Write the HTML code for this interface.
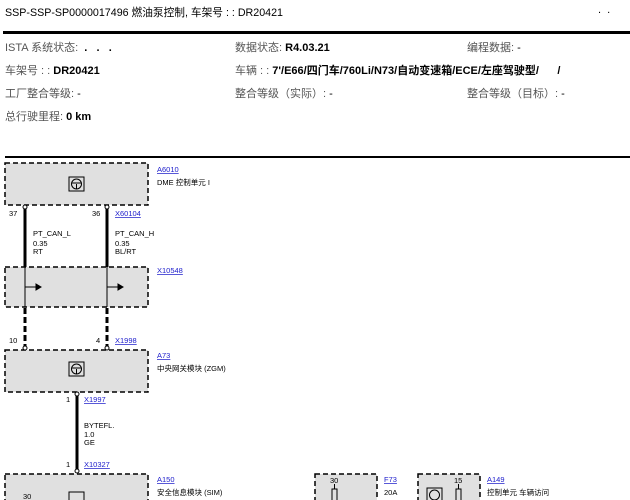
<!DOCTYPE html>
<html><head><meta charset="utf-8"><style>
body{margin:0;width:630px;height:500px;overflow:hidden;background:#fff;font-family:"Liberation Sans","Noto Sans CJK SC",sans-serif;color:#000;position:relative}
.t{position:absolute;font-size:11px;white-space:nowrap}
.g{color:#555}
b{font-weight:bold;color:#000}
</style></head><body>
<div class="t" style="left:5px;top:5px;font-size:10.7px">SSP-SSP-SP0000017496 燃油泵控制, 车架号 : : DR20421</div>
<div class="t" style="left:598px;top:4px">.&nbsp;&nbsp;.</div>
<div style="position:absolute;left:3px;top:31px;width:627px;height:3px;background:#000"></div>
<div class="t" style="left:5px;top:39px"><span class="g">ISTA 系统状态:</span> <b>&nbsp;.&nbsp;&nbsp;&nbsp;.&nbsp;&nbsp;&nbsp;.</b></div>
<div class="t" style="left:235px;top:39px"><span class="g">数据状态:</span> <b>R4.03.21</b></div>
<div class="t" style="left:467px;top:39px"><span class="g">编程数据:</span> -</div>
<div class="t" style="left:5px;top:62px"><span class="g">车架号 : :</span> <b>DR20421</b></div>
<div class="t" style="left:235px;top:62px"><span class="g">车辆 : :</span> <b>7'/E66/四门车/760Li/N73/自动变速箱/ECE/左座驾驶型/&nbsp;&nbsp;&nbsp;&nbsp;&nbsp;&nbsp;/</b></div>
<div class="t" style="left:5px;top:85px"><span class="g">工厂整合等级:</span> -</div>
<div class="t" style="left:235px;top:85px"><span class="g">整合等级（实际）:</span> -</div>
<div class="t" style="left:467px;top:85px"><span class="g">整合等级（目标）:</span> -</div>
<div class="t" style="left:5px;top:108px"><span class="g">总行驶里程:</span> <b>0 km</b></div>
<div style="position:absolute;left:5px;top:156px;width:625px;height:2px;background:#000"></div>
<svg style="position:absolute;left:0;top:0" width="630" height="500" font-family="Liberation Sans, Noto Sans CJK SC, sans-serif" font-size="7.5">
<g fill="#e0e0e0" stroke="#000" stroke-width="1.5" stroke-dasharray="5,3">
<rect x="5" y="163" width="143" height="42"/>
<rect x="5" y="267" width="143" height="40"/>
<rect x="5" y="350" width="143" height="42"/>
<rect x="5" y="474" width="143" height="40"/>
<rect x="315" y="474" width="62" height="40"/>
<rect x="418" y="474" width="62" height="40"/>
</g>
<g stroke="#000" stroke-width="3">
<line x1="25" y1="208" x2="25" y2="267"/><line x1="107" y1="208" x2="107" y2="267"/>
<line x1="77" y1="395" x2="77" y2="470"/>
</g>
<g stroke="#000" stroke-width="1"><line x1="25" y1="267" x2="25" y2="307"/><line x1="107" y1="267" x2="107" y2="307"/></g>
<g stroke="#000" stroke-width="3" stroke-dasharray="6,3">
<line x1="25" y1="308" x2="25" y2="347"/><line x1="107" y1="308" x2="107" y2="347"/></g>
<g fill="#fff" stroke="#000" stroke-width="1">
<circle cx="25" cy="207" r="2"/><circle cx="107" cy="207" r="2"/>
<circle cx="25" cy="348" r="2"/><circle cx="107" cy="348" r="2"/>
<circle cx="77" cy="394" r="2"/><circle cx="77" cy="471" r="2"/>
</g>
<g stroke="#000" stroke-width="1" fill="#000">
<line x1="25" y1="287" x2="38" y2="287"/><path d="M36 284 L41 287 L36 290Z"/>
<line x1="107" y1="287" x2="120" y2="287"/><path d="M118 284 L123 287 L118 290Z"/>
</g>
<g fill="none" stroke="#000" stroke-width="1">
<rect x="69" y="177" width="15" height="14"/><circle cx="76.5" cy="184" r="5"/><path d="M71.5 183 H81.5 M76.5 184 V189"/>
<rect x="69" y="362" width="15" height="14"/><circle cx="76.5" cy="369" r="5"/><path d="M71.5 368 H81.5 M76.5 369 V374"/>
<rect x="69" y="492" width="15" height="14"/>
<rect x="427" y="488" width="15" height="14"/><circle cx="434.5" cy="495" r="5"/>
<rect x="332" y="489" width="5" height="12"/><rect x="456" y="489" width="5" height="12"/>
<line x1="334.5" y1="484" x2="334.5" y2="489"/><line x1="458.5" y1="484" x2="458.5" y2="489"/>
</g>
<g fill="#000">
<text x="9" y="216">37</text><text x="92" y="216">36</text>
<text x="33" y="236">PT_CAN_L</text><text x="33" y="246">0.35</text><text x="33" y="254">RT</text>
<text x="115" y="236">PT_CAN_H</text><text x="115" y="246">0.35</text><text x="115" y="254">BL/RT</text>
<text x="9" y="343">10</text><text x="96" y="343">4</text>
<text x="66" y="402">1</text><text x="66" y="467">1</text>
<text x="84" y="428">BYTEFL.</text><text x="84" y="437">1.0</text><text x="84" y="445">GE</text>
<text x="157" y="185">DME 控制单元 I</text>
<text x="157" y="371">中央网关模块 (ZGM)</text>
<text x="157" y="495">安全信息模块 (SIM)</text>
<text x="384" y="495">20A</text>
<text x="487" y="495">控制单元 车辆访问</text>
<text x="23" y="499">30</text><text x="330" y="483">30</text><text x="454" y="483">15</text>
</g>
<g fill="#2020cc" text-decoration="underline">
<text x="157" y="172">A6010</text><text x="115" y="216">X60104</text>
<text x="157" y="273">X10548</text><text x="115" y="343">X1998</text>
<text x="157" y="358">A73</text><text x="84" y="402">X1997</text>
<text x="84" y="467">X10327</text><text x="157" y="482">A150</text>
<text x="384" y="482">F73</text><text x="487" y="482">A149</text>
</g>
</svg>
</body></html>
